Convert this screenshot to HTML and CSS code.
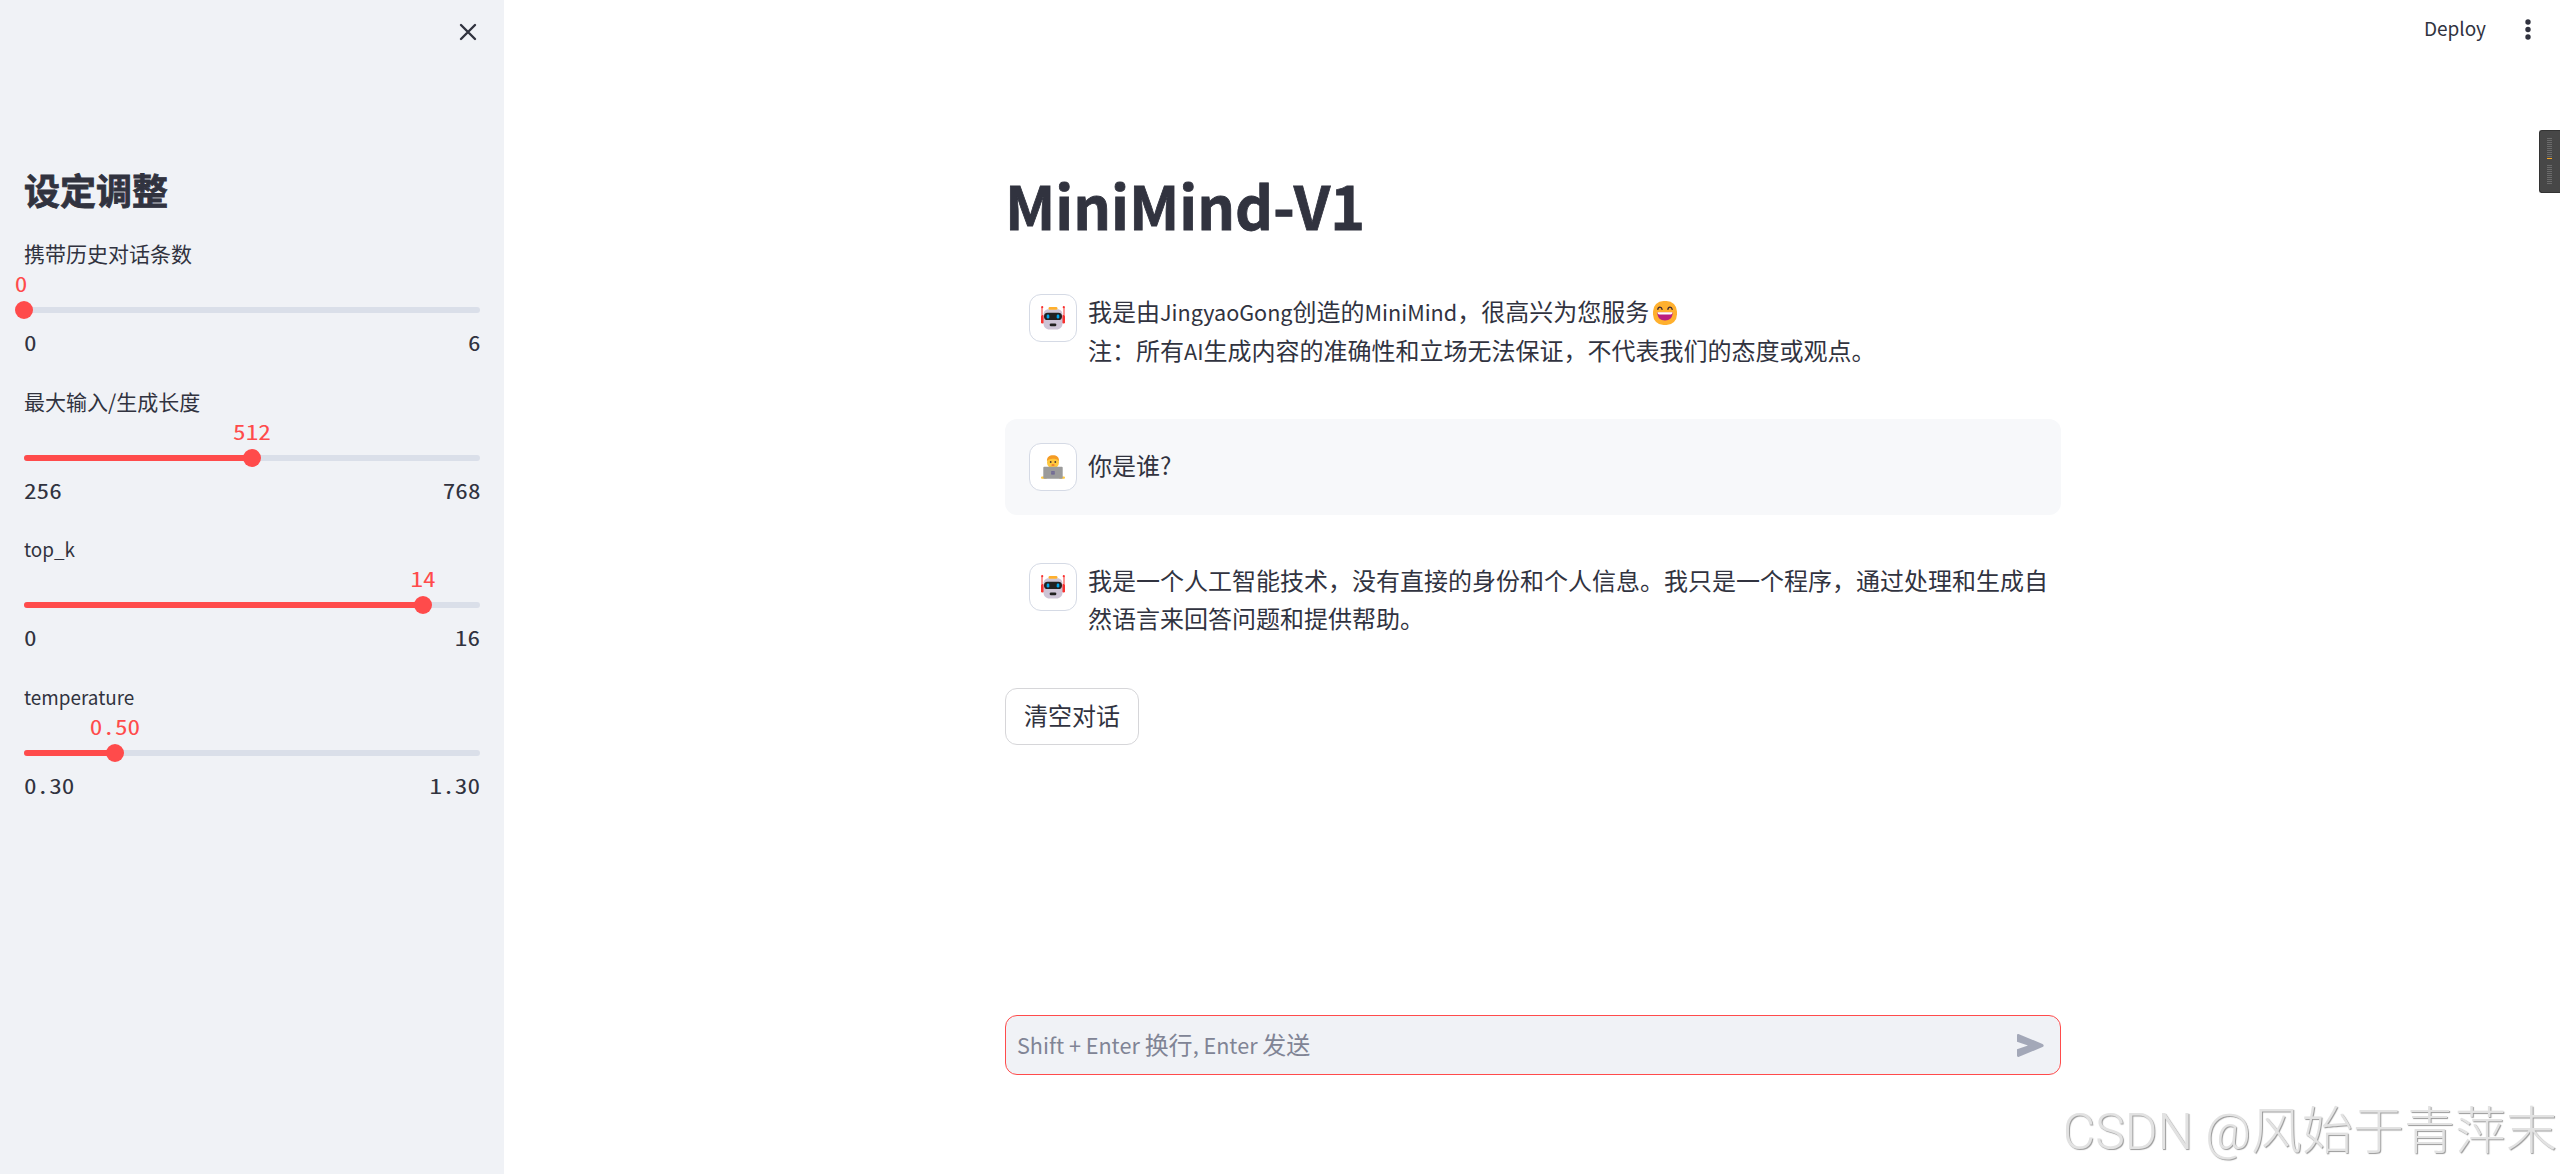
FILE: index.html
```html
<!DOCTYPE html>
<html lang="zh-CN">
<head>
  <meta charset="UTF-8">
  <title>MiniMind-V1</title>
  <link rel="stylesheet" href="styles.css">
</head>
<body>

  <!-- shared avatars -->
  <svg class="defs" width="0" height="0">
    <symbol id="robot" viewBox="0 0 24 24">
      <path d="M1 1.5V9M23 1.5V9" stroke="#f8312f" stroke-width="1"/>
      <circle cx="1.2" cy="1.2" r="1.1" fill="#f8312f"/>
      <circle cx="22.8" cy="1.2" r="1.1" fill="#f8312f"/>
      <rect x="0" y="9" width="3" height="8.5" rx="1.3" fill="#f8312f"/>
      <rect x="21" y="9" width="3" height="8.5" rx="1.3" fill="#f8312f"/>
      <path d="M7.500 3.200h9c3 0 5 2.300 5 5.300v9c0 3.500-2.500 6-6 6h-7c-3.500 0-6-2.500-6-6v-9c0-3 2-5.300 5-5.300z" fill="#cdc4d6"/>
      <rect x="7.5" y="1" width="9" height="2.800" rx="1.400" fill="#ffb02e"/>
      <rect x="3" y="6.800" width="18" height="7.200" rx="3.600" fill="#212121"/>
      <rect x="5.700" y="8.600" width="2.600" height="3.800" rx="1.200" fill="#00a6ed"/>
      <rect x="15.700" y="8.600" width="2.600" height="3.800" rx="1.200" fill="#00a6ed"/>
      <rect x="8.700" y="17.400" width="6.600" height="2.800" rx="1.200" fill="#212121"/>
    </symbol>
    <symbol id="coder" viewBox="0 0 24 24">
      <rect x="6" y="2" width="12" height="11" rx="5.500" fill="#ffc83d"/>
      <path d="M6 6.500C5.500 2 8.500.2 12 .2s6.500 1.800 6 6.300c-.7-1.600-2-2.200-3.500-2.500-2.500-.4-5 .2-6.500.4-1 .4-1.600 1.100-2 2.100z" fill="#f59b23"/>
      <circle cx="9.700" cy="7" r=".9" fill="#4a3b35"/>
      <circle cx="14.300" cy="7" r=".9" fill="#4a3b35"/>
      <rect x="10.500" y="9.600" width="3" height="1" rx=".5" fill="#e2482d"/>
      <rect x="0" y="21.500" width="6" height="2.300" rx="1.100" fill="#ffc83d"/>
      <rect x="18" y="21.500" width="6" height="2.300" rx="1.100" fill="#ffc83d"/>
      <rect x="2.300" y="11.700" width="19.400" height="12" rx="1" fill="#9b9b9b"/>
      <rect x="10.300" y="16.200" width="3.300" height="3.300" fill="#635994"/>
      <path d="M12 16.200v3.300M10.300 17.850h3.300" stroke="#9b9b9b" stroke-width=".4"/>
    </symbol>
  </svg>

  <div class="app">
    <aside class="sidebar">
      <div class="sidebar-top">
        <svg class="close" viewBox="0 0 18 18"><path d="M2 2l14 14M16 2L2 16"/></svg>
      </div>
      <h2>设定调整</h2>

      <div class="slider">
        <label>携带历史对话条数</label>
        <div class="track" style="--pos: 0%">
          <div class="fill"></div>
          <div class="thumb"><span class="value first">0</span></div>
        </div>
        <div class="range"><span>0</span><span>6</span></div>
      </div>

      <div class="slider">
        <label>最大输入/生成长度</label>
        <div class="track" style="--pos: 50%">
          <div class="fill"></div>
          <div class="thumb"><span class="value">512</span></div>
        </div>
        <div class="range"><span>256</span><span>768</span></div>
      </div>

      <div class="slider">
        <label><span class="en">top_k</span></label>
        <div class="track" style="--pos: 87.5%">
          <div class="fill"></div>
          <div class="thumb"><span class="value">14</span></div>
        </div>
        <div class="range"><span>0</span><span>16</span></div>
      </div>

      <div class="slider">
        <label><span class="en">temperature</span></label>
        <div class="track" style="--pos: 20%">
          <div class="fill"></div>
          <div class="thumb"><span class="value">0.50</span></div>
        </div>
        <div class="range"><span>0.30</span><span>1.30</span></div>
      </div>
    </aside>

    <main class="main">
      <header class="toolbar">
        <span class="deploy">Deploy</span>
        <svg class="dots" viewBox="0 0 6 21"><circle cx="3" cy="3" r="2.700"/><circle cx="3" cy="10.500" r="2.700"/><circle cx="3" cy="18" r="2.700"/></svg>
      </header>

      <div class="content">
        <h1>MiniMind-V1</h1>

        <div class="message">
          <div class="avatar"><svg><use href="#robot"/></svg></div>
          <p>我是由<span class="en">JingyaoGong</span>创造的<span class="en">MiniMind</span>，很高兴为您服务<svg class="emoji" viewBox="0 0 24 24">
            <rect width="24" height="24" rx="10.500" fill="#ffb02e"/>
            <path d="M4.800 8.300c.4-3 3.800-3 4.300 0M14.900 8.300c.4-3 3.800-3 4.300 0" fill="none" stroke="#402a32" stroke-width="1.300" stroke-linecap="round"/>
            <path d="M4.300 11.500h15.400c0 5-3 8-7.700 8s-7.700-3-7.700-8z" fill="#bb1d80"/>
            <path d="M4.600 11.300h14.800c0 1.500-.6 2.200-1.800 2.200H6.400c-1.200 0-1.800-.7-1.800-2.200z" fill="#fff"/>
          </svg><br>注：所有<span class="en">AI</span>生成内容的准确性和立场无法保证，不代表我们的态度或观点。</p>
        </div>

        <div class="message user">
          <div class="avatar"><svg><use href="#coder"/></svg></div>
          <p>你是谁?</p>
        </div>

        <div class="message">
          <div class="avatar"><svg><use href="#robot"/></svg></div>
          <p>我是一个人工智能技术，没有直接的身份和个人信息。我只是一个程序，通过处理和生成自然语言来回答问题和提供帮助。</p>
        </div>

        <button class="clear-btn">清空对话</button>
      </div>

      <div class="chat-input">
        <span class="placeholder"><span class="en">Shift + Enter </span>换行<span class="en">, Enter </span>发送</span>
        <svg class="send" viewBox="0 0 27 23"><path d="M0 1.500C0 .3.900-.2 2 .3l23.500 9.600c1.600.7 1.600 2.500 0 3.200L2 22.700c-1.100.5-2 0-2-1.200v-6.200l11-3.800L0 7.700z"/></svg>
      </div>
    </main>
  </div>

  <div class="side-handle">
    <div class="ticks"></div>
    <div class="tick-active"></div>
    <div class="ticks"></div>
  </div>

  <div class="watermark"><span>CSDN @</span>风始于青萍末</div>

</body>
</html>
```
FILE: styles.css
```css
* {
  box-sizing: border-box;
}

body {
  margin: 0;
  height: 100vh;
  overflow: hidden;
  position: relative;
  font-family: "Noto Sans CJK SC", sans-serif;
  font-size: 24px;
  color: #31333f;
  background-color: #fff;
}

.defs {
  position: absolute;
}

.en {
  font-size: 0.9em;
}

.app {
  display: flex;
  height: 100vh;
}

.sidebar {
  width: 504px;
  flex-shrink: 0;
  padding: 0 24px;
  background-color: #f0f2f6;
}

.sidebar-top {
  display: flex;
  justify-content: flex-end;
  height: 161px;
  padding: 23px 3px 0 0;
}

.close {
  width: 18px;
  height: 18px;
  fill: none;
  stroke: #31333f;
  stroke-width: 2.4;
  stroke-linecap: round;
}

h1,
h2 {
  font-weight: 700;
  -webkit-text-stroke: 0.8px #31333f;
}

h2 {
  margin: 0;
  height: 76px;
  font-size: 36px;
  line-height: 57px;
}

.slider {
  height: 147.7px;
}

.slider label {
  display: block;
  height: 70px;
  font-size: 21px;
  line-height: 33px;
}

.track {
  position: relative;
  height: 6px;
  border-radius: 3px;
  background-color: #dadfe9;
}

.fill {
  width: var(--pos);
  height: 6px;
  border-radius: 3px;
  background-color: #ff4b4b;
}

.thumb {
  position: absolute;
  top: -6px;
  left: calc(var(--pos) - 9px);
  width: 18px;
  height: 18px;
  border-radius: 50%;
  background-color: #ff4b4b;
}

.value,
.range {
  font-family: "Noto Sans Mono CJK SC", "Liberation Mono", monospace;
  font-size: 21px;
  line-height: 30px;
}

/* digits are half-width in this font, stretch them */
.value {
  position: absolute;
  bottom: 21px;
  left: 50%;
  transform: translateX(-50%) scaleX(1.2);
  color: #ff4b4b;
}

.value.first {
  left: 6px;
}

.range {
  display: flex;
  justify-content: space-between;
  padding-top: 14px;
}

.range span {
  transform: scaleX(1.2);
  transform-origin: left;
}

.range span:last-child {
  transform-origin: right;
}

.main {
  flex: 1;
  display: flex;
  flex-direction: column;
  align-items: center;
  padding: 0 0 99px 2px;
}

.toolbar {
  align-self: stretch;
  display: flex;
  justify-content: flex-end;
  align-items: center;
  gap: 39px;
  height: 58px;
  padding-right: 29px;
}

.deploy {
  padding-bottom: 3px;
  font-size: 19px;
}

.dots {
  width: 6px;
  height: 21px;
  fill: #31333f;
}

.content {
  flex: 1;
  width: 1056px;
  padding-top: 107px;
}

h1 {
  margin: 0 0 25px;
  font-size: 59px;
  line-height: 80px;
}

.message {
  display: flex;
  gap: 11px;
  height: 125px;
  margin-bottom: 24px;
  padding: 24px;
  border-radius: 12px;
}

.message.user {
  height: 96px;
  background-color: #f7f8fa;
}

.avatar {
  flex-shrink: 0;
  display: flex;
  justify-content: center;
  align-items: center;
  width: 48px;
  height: 48px;
  border: 1px solid #d5dae5;
  border-radius: 12px;
  background-color: #fff;
}

.avatar svg {
  width: 24px;
  height: 24px;
}

.message p {
  margin: -2px -14px 0 0;
  line-height: 38.4px;
}

.message.user p {
  line-height: 48px;
}

.emoji {
  width: 24px;
  height: 24px;
  margin-left: 4px;
  vertical-align: -4px;
}

.clear-btn {
  display: block;
  height: 57px;
  padding: 0 18px 4px;
  border: 1px solid #d6d6d9;
  border-radius: 12px;
  background-color: #fff;
  color: #31333f;
  font: inherit;
}

.chat-input {
  display: flex;
  justify-content: space-between;
  align-items: center;
  width: 1056px;
  height: 60px;
  padding: 0 16px 0 11px;
  border: 1px solid #ff4b4b;
  border-radius: 12px;
  background-color: #f0f2f6;
  color: #808495;
}

.placeholder {
  padding-bottom: 4px;
}

.send {
  width: 27px;
  height: 23px;
  fill: #a3a8b8;
}

/* overlays */
.side-handle {
  position: absolute;
  top: 130px;
  right: 0;
  width: 21px;
  height: 63px;
  padding: 7px 0 0 7px;
  border: 1px solid #333;
  border-right: none;
  border-radius: 3px 0 0 3px;
  background-color: #474747;
}

.ticks {
  width: 5px;
  height: 20px;
  background: repeating-linear-gradient(#6b6b6b 0 1px, transparent 1px 2px);
}

.tick-active {
  width: 5px;
  height: 1px;
  margin-bottom: 6px;
  background-color: #f5a623;
}

.watermark {
  position: absolute;
  right: 3px;
  bottom: 10px;
  font-size: 51px;
  font-weight: 300;
  line-height: 64px;
  white-space: nowrap;
  color: #e2e2e2;
  text-shadow: 1px 1px 1px #999;
}

.watermark span {
  font-family: Roboto, sans-serif;
  font-size: 50px;
}
```
